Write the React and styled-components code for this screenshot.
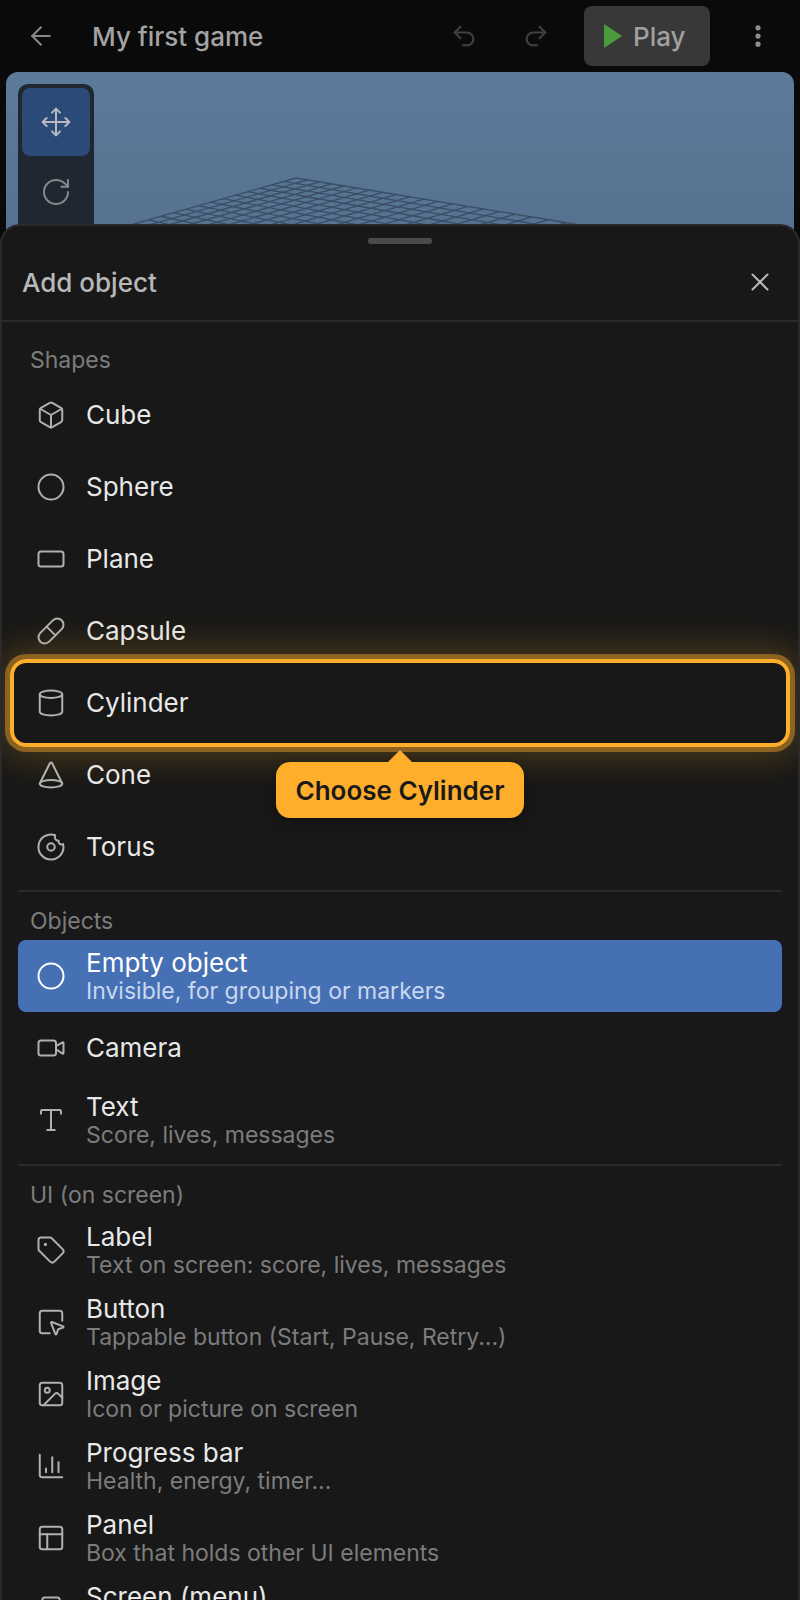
import styled, { createGlobalStyle } from "styled-components";
import {
    ArrowLeft,
    Box,
    ChartColumn,
    Circle,
    Cone,
    Cylinder,
    Donut,
    EllipsisVertical,
    Image,
    Move,
    PanelsTopLeft,
    Pill,
    RectangleHorizontal,
    Redo2,
    RotateCw,
    Scaling,
    Smartphone,
    SquareMousePointer,
    Tag,
    Type,
    Undo2,
    Video,
    X
} from "lucide-react";

const GlobalStyle = createGlobalStyle`
    * {
        box-sizing: border-box;
    }
    html, body {
        margin: 0;
        background: #0a0a0a;
    }
    body {
        font-family: Inter, "Liberation Sans", sans-serif;
    }
`;

const Page = styled.div`
    position: relative;
    width: 800px;
    height: 1600px;
    overflow: hidden;
    background: #0a0a0a;
    display: flex;
    flex-direction: column;
`;
const TopBar = styled.header`
    height: 72px;
    flex-shrink: 0;
    display: flex;
    align-items: center;
    padding: 0 18px 0 26px;
`;
const BackButton = styled.div`
    display: flex;
    color: #8a8a8a;
    margin-right: 36px;
`;
const GameTitle = styled.h1`
    flex: 1;
    margin: 0;
    font-size: 26px;
    font-weight: 500;
    color: #a3a3a3;
`;
const HistoryButton = styled.div`
    width: 72px;
    display: flex;
    justify-content: center;
    color: #414141;
`;
const PlayButton = styled.div`
    width: 126px;
    height: 60px;
    margin: 0 24px 0 12px;
    border-radius: 8px;
    background: #383838;
    display: flex;
    align-items: center;
    gap: 11px;
    padding-left: 20px;
    font-size: 26px;
    font-weight: 500;
    color: #a0a0a0;
`;
const MoreButton = styled.div`
    width: 48px;
    display: flex;
    justify-content: center;
    color: #8f8f8f;
`;
const Viewport = styled.main`
    position: relative;
    flex: 1;
    margin: 0 6px;
    border-radius: 12px 12px 0 0;
    overflow: hidden;
    background: linear-gradient(#5c7a9a, #567290 160px);
`;
const GridSvg = styled.svg`
    position: absolute;
    left: -6px;
    top: -72px;
`;
const ToolRail = styled.div`
    position: absolute;
    left: 12px;
    top: 12px;
    width: 76px;
    padding: 4px;
    border-radius: 10px;
    background: #1f2730;
    display: flex;
    flex-direction: column;
    gap: 2px;
`;
const ToolButton = styled.div`
    height: 68px;
    border-radius: 8px;
    background: ${(p) => (p.$active ? "#2c4a78" : "transparent")};
    color: ${(p) => (p.$active ? "#b5bac2" : "#85898e")};
    display: flex;
    align-items: center;
    justify-content: center;
`;
const Sheet = styled.section`
    position: absolute;
    left: 0;
    right: 0;
    top: 224px;
    bottom: 0;
    background: #181818;
    border: 2px solid #2a2a2a;
    border-bottom: none;
    border-radius: 20px 20px 0 0;
    overflow: hidden;
`;
const Handle = styled.div`
    width: 64px;
    height: 6px;
    margin: 12px auto 0;
    border-radius: 3px;
    background: #4a4a4a;
`;
const SheetHeader = styled.div`
    height: 78px;
    display: flex;
    align-items: center;
    justify-content: space-between;
    padding: 0 23px 0 20px;
    border-bottom: 2px solid #2a2a2a;
    font-size: 26px;
    font-weight: 500;
    color: #b8b8b8;
`;
const CloseButton = styled.div`
    display: flex;
    color: #b8b8b8;
`;
const List = styled.div`
    padding: 9px 16px 0;
`;
const SectionLabel = styled.div`
    padding: 16px 12px 6px;
    font-size: 23px;
    line-height: 26px;
    color: #7c7c7c;
`;
const Divider = styled.div`
    height: 2px;
    margin-top: ${(p) => (p.$wide ? "8px" : "7px")};
    background: #2a2a2a;
`;
const Row = styled.div`
    position: relative;
    height: 72px;
    display: flex;
    align-items: center;
    gap: 20px;
    padding-left: 18px;
    border-radius: 8px;
    background: ${(p) => (p.$selected ? "#4670b4" : "transparent")};
    color: ${(p) => (p.$selected ? "#fff" : "#e8e8e8")};
    svg {
        flex-shrink: 0;
        color: ${(p) => (p.$selected ? "#fff" : "#b0b0b0")};
    }
`;
const RowText = styled.div`
    display: flex;
    flex-direction: column;
`;
const RowLabel = styled.div`
    font-size: 26px;
    line-height: 30px;
`;
const RowHint = styled.div`
    font-size: 23px;
    line-height: 26px;
    color: ${(p) => (p.$selected ? "#c9d7ef" : "#7c7c7c")};
`;
const Spotlight = styled.div`
    position: absolute;
    inset: -8px;
    border: 4px solid #ffae2b;
    border-radius: 16px;
    box-shadow: 0 0 0 5px rgba(255, 174, 43, 0.42), 0 0 36px 10px rgba(255, 174, 43, 0.24);
    pointer-events: none;
`;
const Tooltip = styled.div`
    position: absolute;
    z-index: 2;
    left: 258px;
    top: 95px;
    width: 248px;
    height: 56px;
    border-radius: 14px;
    background: #ffae2b;
    color: #1a1a1a;
    font-size: 26px;
    font-weight: 600;
    display: flex;
    align-items: center;
    justify-content: center;
    box-shadow: 0 4px 14px rgba(0, 0, 0, 0.35);
    &::before {
        content: "";
        position: absolute;
        left: 112px;
        top: -12px;
        border-left: 12px solid transparent;
        border-right: 12px solid transparent;
        border-bottom: 12px solid #ffae2b;
    }
`;

const gridPoint = (u, v) => {
    const w = 1 - 0.01 * u - 0.002 * v;
    return [296 + (11.5 * u - 12 * v) / w, 178 + (1.9 * u + 3.4 * v) / w];
};
const GRID_CELLS = 40;
const gridLines = [];
for (let i = 0; i <= GRID_CELLS; i++) {
    gridLines.push([gridPoint(i, 0), gridPoint(i, GRID_CELLS)]);
    gridLines.push([gridPoint(0, i), gridPoint(GRID_CELLS, i)]);
}

const ICON = { size: 30, strokeWidth: 1.6 };

const sections = [
    {
        title: "Shapes",
        items: [
            { icon: Box, label: "Cube" },
            { icon: Circle, label: "Sphere" },
            { icon: RectangleHorizontal, label: "Plane" },
            { icon: Pill, label: "Capsule" },
            { icon: Cylinder, label: "Cylinder", spotlight: "Choose Cylinder" },
            { icon: Cone, label: "Cone" },
            { icon: Donut, label: "Torus" }
        ]
    },
    {
        title: "Objects",
        items: [
            { icon: Circle, label: "Empty object", hint: "Invisible, for grouping or markers", selected: true },
            { icon: Video, label: "Camera" },
            { icon: Type, label: "Text", hint: "Score, lives, messages" }
        ]
    },
    {
        title: "UI (on screen)",
        items: [
            { icon: Tag, label: "Label", hint: "Text on screen: score, lives, messages" },
            { icon: SquareMousePointer, label: "Button", hint: "Tappable button (Start, Pause, Retry...)" },
            { icon: Image, label: "Image", hint: "Icon or picture on screen" },
            { icon: ChartColumn, label: "Progress bar", hint: "Health, energy, timer..." },
            { icon: PanelsTopLeft, label: "Panel", hint: "Box that holds other UI elements" },
            // its hint line falls below the fold, only the label shows
            { icon: Smartphone, label: "Screen (menu)", hint: "\u00a0" }
        ]
    }
];

const App = () => {
    return (
        <Page>
            <GlobalStyle />
            <TopBar>
                <BackButton>
                    <ArrowLeft size={30} strokeWidth={1.6} />
                </BackButton>
                <GameTitle>My first game</GameTitle>
                <HistoryButton>
                    <Undo2 size={28} strokeWidth={1.75} />
                </HistoryButton>
                <HistoryButton>
                    <Redo2 size={28} strokeWidth={1.75} />
                </HistoryButton>
                <PlayButton>
                    <svg width="18" height="24" viewBox="0 0 18 24">
                        <polygon points="0,0 18,12 0,24" fill="#4c9a3e" />
                    </svg>
                    Play
                </PlayButton>
                <MoreButton>
                    <EllipsisVertical size={28} strokeWidth={2.5} />
                </MoreButton>
            </TopBar>
            <Viewport>
                <GridSvg width="800" height="300" viewBox="0 0 800 300">
                    {gridLines.map(([a, b], i) => (
                        <line key={i} x1={a[0]} y1={a[1]} x2={b[0]} y2={b[1]} stroke="#3a4d64" strokeWidth="1.3" />
                    ))}
                </GridSvg>
                <ToolRail>
                    <ToolButton $active>
                        <Move size={32} strokeWidth={1.5} />
                    </ToolButton>
                    <ToolButton>
                        <RotateCw size={32} strokeWidth={1.5} />
                    </ToolButton>
                    <ToolButton>
                        <Scaling size={32} strokeWidth={1.5} />
                    </ToolButton>
                </ToolRail>
            </Viewport>
            <Sheet>
                <Handle />
                <SheetHeader>
                    Add object
                    <CloseButton>
                        <X size={30} strokeWidth={1.6} />
                    </CloseButton>
                </SheetHeader>
                <List>
                    {sections.map((section, s) => (
                        <div key={section.title}>
                            <SectionLabel>{section.title}</SectionLabel>
                            {section.items.map((item) => (
                                <Row key={item.label} $selected={item.selected}>
                                    <item.icon {...ICON} />
                                    <RowText>
                                        <RowLabel>{item.label}</RowLabel>
                                        {item.hint && <RowHint $selected={item.selected}>{item.hint}</RowHint>}
                                    </RowText>
                                    {item.spotlight && <Spotlight />}
                                    {item.spotlight && <Tooltip>{item.spotlight}</Tooltip>}
                                </Row>
                            ))}
                            {s < sections.length - 1 && <Divider $wide={s === 1} />}
                        </div>
                    ))}
                </List>
            </Sheet>
        </Page>
    );
};

export default App;
